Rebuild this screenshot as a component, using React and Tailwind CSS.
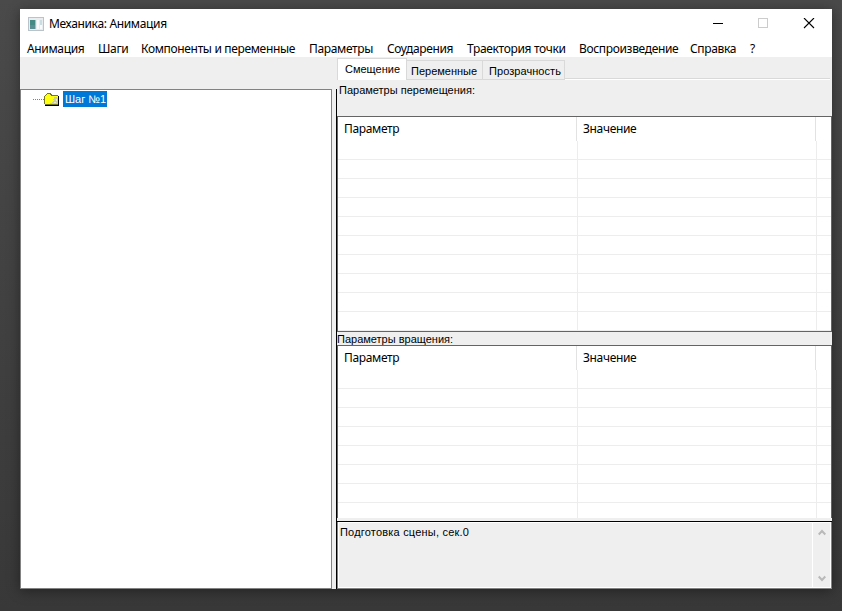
import React from "react";

const menu = [
  { label: "Анимация", slot: "w-[71px]" },
  { label: "Шаги", slot: "w-[43px]" },
  { label: "Компоненты и переменные", slot: "w-[168px]" },
  { label: "Параметры", slot: "w-[78px]" },
  { label: "Соударения", slot: "w-[80px]" },
  { label: "Траектория точки", slot: "w-[112px]" },
  { label: "Воспроизведение", slot: "w-[111px]" },
  { label: "Справка", slot: "w-[60px]" },
  { label: "?", slot: "w-[10px]" },
];

const uiFont = "font-['Noto_Sans','Open_Sans',sans-serif]";
const classicFont = "font-['Liberation_Sans',Arial,sans-serif]";

function AppIcon() {
  return (
    <svg width="16" height="14" viewBox="0 0 16 14" shapeRendering="crispEdges">
      <rect width="16" height="14" fill="#b9c3c9" />
      <rect x="1" y="1" width="14" height="12" fill="#e9edf0" />
      <rect x="2" y="3" width="5" height="9" fill="#458a84" />
      <rect x="2" y="8" width="5" height="4" fill="#5b8f93" />
      <rect x="7" y="3" width="1" height="9" fill="#a3bfc2" />
      <rect x="9" y="3" width="2" height="9" fill="#f8fafb" />
      <rect x="12" y="3" width="2" height="5" fill="#c9dde2" />
      <rect x="12" y="8" width="2" height="4" fill="#f8fafb" />
    </svg>
  );
}

function FolderIcon() {
  return (
    <svg width="16" height="13" viewBox="0 0 16 13" shapeRendering="crispEdges">
      <path d="M1 2h14v11H1z" fill="#000" />
      <path d="M14 1h2v2h-2z" fill="#fff" />
      <path d="M0 3h1V2h1V1h1V0h4v1h1v1h6v10H1v-1H0z" fill="#77771c" />
      <path d="M1 3h1V2h1V1h3v1h1v1h7v8H1z" fill="#ffff10" />
      <path d="M10 4h3v1h1v6H6v-1h2V9h1V8h1V7h-1V6h1z" fill="#cfcf9c" />
      <path d="M12 6h1v2h-1zM10 9h2v1h-2z" fill="#ececc8" />
      <path d="M2 4h5v1H2z" fill="#ffff90" />
    </svg>
  );
}

function TitleBar() {
  return (
    <header className="flex h-[30px] shrink-0 items-center bg-white pl-2">
      <AppIcon />
      <span className="ml-[5px] w-[640px] text-[12px] leading-[16px] whitespace-nowrap">Механика: Анимация</span>
      <svg className="ml-[24px]" width="102" height="12" viewBox="0 0 102 12" fill="none">
        <path d="M0 5.5h10" stroke="#000" />
        <rect x="45.5" y="0.5" width="9" height="9" stroke="#ccc" />
        <path d="M91 0l10 10M101 0L91 10" stroke="#000" strokeWidth="1.1" />
      </svg>
    </header>
  );
}

function ParameterList({ rows, height }) {
  return (
    <div className={`flex shrink-0 flex-col overflow-hidden bg-white ${height}`}>
      <div className="flex h-6 shrink-0 text-[12px] leading-[24px]">
        <span className="w-[239px] border-r border-[#e2e2e2] pl-[6px]">Параметр</span>
        <span className="w-[239px] border-r border-[#e2e2e2] pl-[6px]">Значение</span>
      </div>
      {Array.from({ length: rows }, (_, i) => (
        <div key={i} className="flex h-[19px] shrink-0 border-b border-[#ededed]">
          <span className="w-[240px] border-r border-[#ededed]" />
          <span className="w-[239px] border-r border-[#ededed]" />
        </div>
      ))}
    </div>
  );
}

function Tabs() {
  return (
    <div className={`flex h-[23px] shrink-0 items-end text-[11px] ${classicFont}`}>
      <span className="h-[22px] w-[70px] border-t border-r border-l border-[#d9d9d9] bg-white pl-[7px] leading-[20px] whitespace-nowrap">Смещение</span>
      <span className="h-5 w-[76px] border-t border-r border-b border-[#d9d9d9] pl-1 leading-[20px] whitespace-nowrap">Переменные</span>
      <span className="h-5 w-[82px] border-t border-r border-b border-[#d9d9d9] pl-[6px] leading-[20px] tracking-[0.06px] whitespace-nowrap">Прозрачность</span>
      <span className="mr-[2px] h-[2px] flex-1 border-t border-[#d9d9d9] bg-white" />
    </div>
  );
}

function LogPanel() {
  return (
    <div className={`flex h-[66px] shrink-0 border border-white bg-[#efefef] text-[11px] ${classicFont}`}>
      <div className="flex-1 pt-[3px] pl-[1px] leading-[13px] tracking-[0.2px]">
        Подготовка сцены, сек.0
      </div>
      <div className="flex w-[18px] flex-col items-center justify-between border-l border-white pt-[6px] pb-[5px]">
        <svg width="8" height="7" viewBox="0 0 8 7" fill="none"><path d="M.7 5.5L4 2l3.3 3.5" stroke="#b9b9b9" strokeWidth="2" /></svg>
        <svg width="8" height="7" viewBox="0 0 8 7" fill="none"><path d="M.7 1.5L4 5l3.3-3.5" stroke="#b9b9b9" strokeWidth="2" /></svg>
      </div>
    </div>
  );
}

export default function App() {
  return (
    <div className={`h-[611px] w-[842px] overflow-hidden bg-linear-to-b from-[#4a4a4a] to-[#383838] pt-[9px] pl-5 tracking-[-0.34px] text-black ${uiFont}`}>
      <div className="flex h-[580px] w-[812px] flex-col bg-[#efefef] shadow-[0_2px_12px_rgba(0,0,0,0.4)]">
        <TitleBar />
        <nav className="flex h-[18px] shrink-0 bg-white pl-[7px] text-[12px] leading-[20px] whitespace-nowrap">
          {menu.map((m) => (
            <span key={m.label} className={m.slot}>{m.label}</span>
          ))}
        </nav>
        <div className="flex min-h-0 flex-1">
          <aside className="mt-8 w-[312px] shrink-0 border border-[#828282] bg-white">
            <div className={`flex h-[18px] items-center pl-3 text-[11px] tracking-normal ${classicFont}`}>
              <span className="w-[11px] border-t border-dotted border-[#808080]" />
              <FolderIcon />
              <span className="ml-[3px] h-4 w-[44px] bg-[#0078d7] pl-[2px] leading-[16px] whitespace-nowrap text-white">Шаг №1</span>
            </div>
          </aside>
          <div className="mt-8 ml-1 w-px shrink-0 bg-black" />
          <main className="flex w-[495px] flex-col">
            <div className="tracking-normal"><Tabs /></div>
            <div className={`h-9 shrink-0 pt-[4px] pl-[2px] text-[11px] leading-[13px] tracking-normal ${classicFont}`}>Параметры перемещения:</div>
            <div className="border border-[#646464]">
              <ParameterList rows={10} height="h-[214px]" />
            </div>
            <div className={`h-[13px] shrink-0 text-[11px] leading-[14px] tracking-normal ${classicFont}`}>Параметры вращения:</div>
            <div className="border border-b-0 border-[#646464]">
              <ParameterList rows={8} height="h-[172px]" />
            </div>
            <div className="h-[3px] shrink-0 bg-[#efefef]" />
            <div className="h-px shrink-0 bg-black" />
            <div className="border-x border-b border-[#828282]">
              <LogPanel />
            </div>
          </main>
        </div>
      </div>
    </div>
  );
}
